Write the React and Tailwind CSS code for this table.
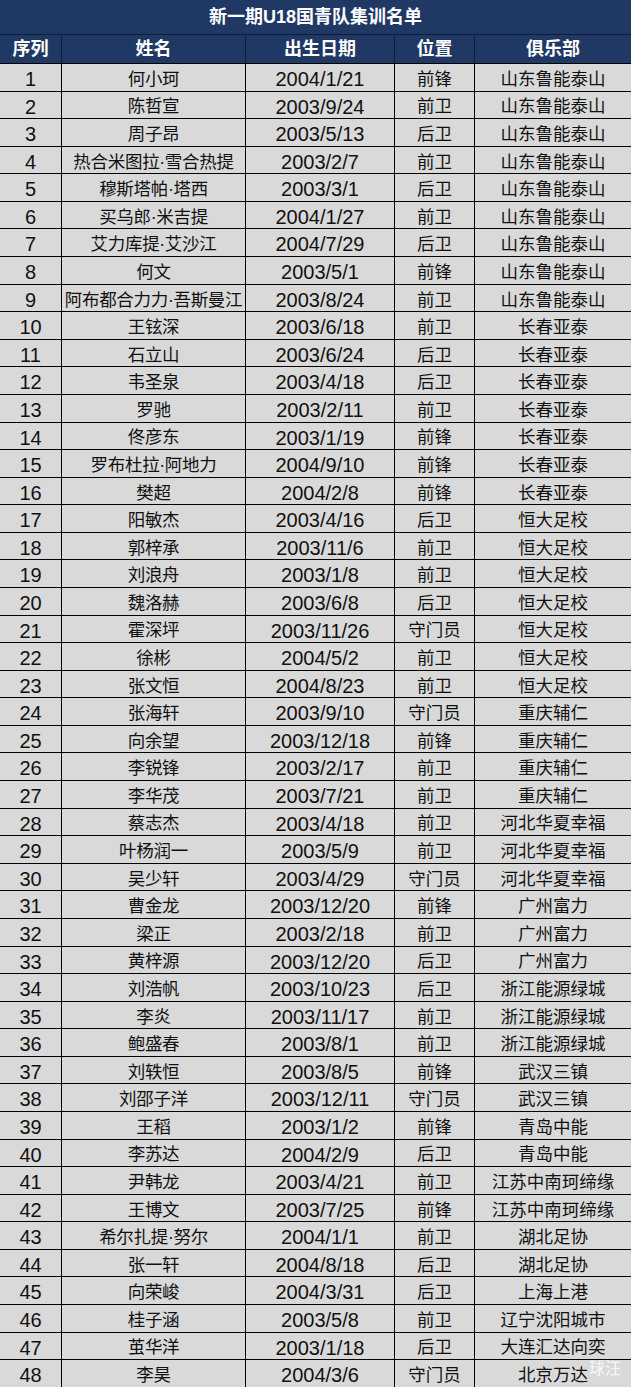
import React from "react";

const players = [
    ["何小珂", "2004/1/21", "前锋", "山东鲁能泰山"],
    ["陈哲宣", "2003/9/24", "前卫", "山东鲁能泰山"],
    ["周子昂", "2003/5/13", "后卫", "山东鲁能泰山"],
    ["热合米图拉·雪合热提", "2003/2/7", "前卫", "山东鲁能泰山"],
    ["穆斯塔帕·塔西", "2003/3/1", "后卫", "山东鲁能泰山"],
    ["买乌郎·米吉提", "2004/1/27", "前卫", "山东鲁能泰山"],
    ["艾力库提·艾沙江", "2004/7/29", "后卫", "山东鲁能泰山"],
    ["何文", "2003/5/1", "前锋", "山东鲁能泰山"],
    ["阿布都合力力·吾斯曼江", "2003/8/24", "前卫", "山东鲁能泰山"],
    ["王铉深", "2003/6/18", "前卫", "长春亚泰"],
    ["石立山", "2003/6/24", "后卫", "长春亚泰"],
    ["韦圣泉", "2003/4/18", "后卫", "长春亚泰"],
    ["罗驰", "2003/2/11", "前卫", "长春亚泰"],
    ["佟彦东", "2003/1/19", "前锋", "长春亚泰"],
    ["罗布杜拉·阿地力", "2004/9/10", "前锋", "长春亚泰"],
    ["樊超", "2004/2/8", "前锋", "长春亚泰"],
    ["阳敏杰", "2003/4/16", "后卫", "恒大足校"],
    ["郭梓承", "2003/11/6", "前卫", "恒大足校"],
    ["刘浪舟", "2003/1/8", "前卫", "恒大足校"],
    ["魏洛赫", "2003/6/8", "后卫", "恒大足校"],
    ["霍深坪", "2003/11/26", "守门员", "恒大足校"],
    ["徐彬", "2004/5/2", "前卫", "恒大足校"],
    ["张文恒", "2004/8/23", "前卫", "恒大足校"],
    ["张海轩", "2003/9/10", "守门员", "重庆辅仁"],
    ["向余望", "2003/12/18", "前锋", "重庆辅仁"],
    ["李锐锋", "2003/2/17", "前卫", "重庆辅仁"],
    ["李华茂", "2003/7/21", "前卫", "重庆辅仁"],
    ["蔡志杰", "2003/4/18", "前卫", "河北华夏幸福"],
    ["叶杨润一", "2003/5/9", "前卫", "河北华夏幸福"],
    ["吴少轩", "2003/4/29", "守门员", "河北华夏幸福"],
    ["曹金龙", "2003/12/20", "前锋", "广州富力"],
    ["梁正", "2003/2/18", "前卫", "广州富力"],
    ["黄梓源", "2003/12/20", "后卫", "广州富力"],
    ["刘浩帆", "2003/10/23", "后卫", "浙江能源绿城"],
    ["李炎", "2003/11/17", "前卫", "浙江能源绿城"],
    ["鲍盛春", "2003/8/1", "前卫", "浙江能源绿城"],
    ["刘轶恒", "2003/8/5", "前锋", "武汉三镇"],
    ["刘邵子洋", "2003/12/11", "守门员", "武汉三镇"],
    ["王稻", "2003/1/2", "前锋", "青岛中能"],
    ["李苏达", "2004/2/9", "后卫", "青岛中能"],
    ["尹韩龙", "2003/4/21", "前卫", "江苏中南珂缔缘"],
    ["王博文", "2003/7/25", "前锋", "江苏中南珂缔缘"],
    ["希尔扎提·努尔", "2004/1/1", "前卫", "湖北足协"],
    ["张一轩", "2004/8/18", "后卫", "湖北足协"],
    ["向荣峻", "2004/3/31", "后卫", "上海上港"],
    ["桂子涵", "2003/5/8", "前卫", "辽宁沈阳城市"],
    ["茧华洋", "2003/1/18", "后卫", "大连汇达向奕"],
    ["李昊", "2004/3/6", "守门员", "北京万达"],
];

const cols = "grid grid-cols-[61px_184px_149px_80px_157px]";
const headers = ["序列", "姓名", "出生日期", "位置", "俱乐部"];

const App = () => {
    return (
        <div
            className="relative w-[631px] bg-[#d9d9d9] text-[#111]"
            style={{ fontFamily: '"Liberation Sans", "Noto Sans CJK SC", sans-serif' }}>
            {/* title */}
            <div className="h-[35px] bg-[#203864] flex items-center justify-center text-white font-bold text-[18px] border-b border-[#0f1e3a]">
                新一期U18国青队集训名单
            </div>
            {/* header */}
            <div className={`${cols} h-[28px] bg-[#203864] text-white font-bold text-[18px]`}>
                {headers.map((h, i) => (
                    <div
                        key={h}
                        className={`flex items-center justify-center ${i > 0 ? "border-l border-[#0f1e3a]" : ""}`}>
                        {h}
                    </div>
                ))}
            </div>
            {/* rows */}
            {players.map((p, idx) => (
                <div key={idx} className={`${cols} h-[27.58px] border-t border-black text-[17.5px]`}>
                    <div className="flex items-center justify-center text-[20px]">{idx + 1}</div>
                    <div className="flex items-center justify-center border-l border-black whitespace-nowrap tracking-[-0.3px]">
                        {p[0]}
                    </div>
                    <div className="flex items-center justify-center border-l border-black text-[20px]">{p[1]}</div>
                    <div className="flex items-center justify-center border-l border-black">{p[2]}</div>
                    <div className="flex items-center justify-center border-l border-black whitespace-nowrap">{p[3]}</div>
                </div>
            ))}
            {/* watermark */}
            <div className="absolute right-[10px] bottom-[6px] text-[16px] text-white/80 pointer-events-none">球汪</div>
        </div>
    );
};

export default App;
